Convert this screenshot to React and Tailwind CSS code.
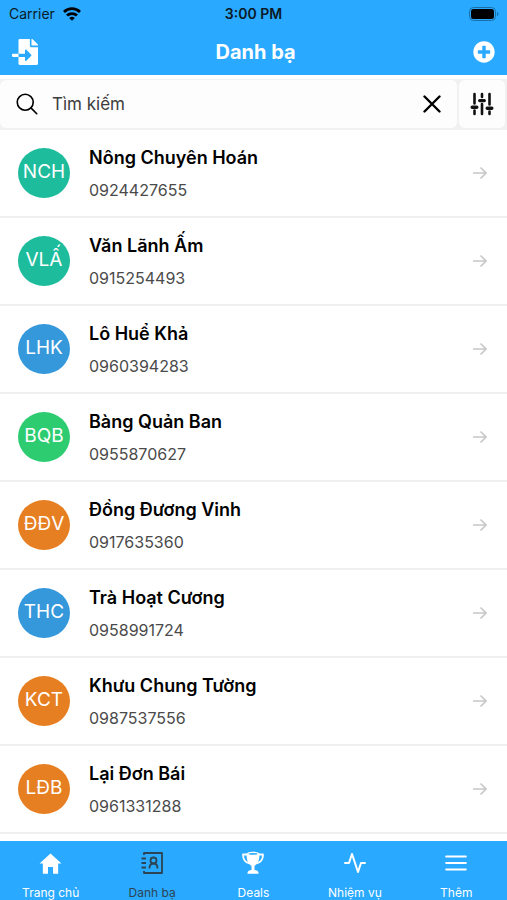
import { FaFileImport, FaPlusCircle } from "react-icons/fa";
import { IoMdHome } from "react-icons/io";
import { IoSearchOutline } from "react-icons/io5";
import { FiActivity, FiMenu } from "react-icons/fi";

const contacts = [
  { initials: "NCH", name: "Nông Chuyên Hoán", phone: "0924427655", color: "bg-[#1dbc9c]" },
  { initials: "VLẤ", name: "Văn Lãnh Ấm", phone: "0915254493", color: "bg-[#1dbc9c]" },
  { initials: "LHK", name: "Lô Huể Khả", phone: "0960394283", color: "bg-[#3498db]" },
  { initials: "BQB", name: "Bàng Quản Ban", phone: "0955870627", color: "bg-[#2ecc71]" },
  { initials: "ĐĐV", name: "Đồng Đương Vinh", phone: "0917635360", color: "bg-[#e67e22]" },
  { initials: "THC", name: "Trà Hoạt Cương", phone: "0958991724", color: "bg-[#3498db]" },
  { initials: "KCT", name: "Khưu Chung Tường", phone: "0987537556", color: "bg-[#e67e22]" },
  { initials: "LĐB", name: "Lại Đơn Bái", phone: "0961331288", color: "bg-[#e67e22]" },
];

function WifiIcon() {
  return (
    <svg width="18" height="14" viewBox="0 0 18 14" fill="none" stroke="#000" strokeWidth="2.8" aria-hidden="true">
      <path d="M1 5a11.4 11.4 0 0 1 16 0" />
      <path d="M4 8.6a7.2 7.2 0 0 1 10 0" />
      <path d="M9 13.8 6.2 11a4 4 0 0 1 5.6 0z" fill="#000" stroke="none" />
    </svg>
  );
}

function BatteryIcon() {
  return (
    <svg width="30" height="14" viewBox="0 0 30 14" aria-hidden="true">
      <rect x="0.5" y="0.5" width="26" height="13" rx="4" fill="none" stroke="#1b6fa6" />
      <rect x="2" y="2" width="23" height="10" rx="2.5" fill="#000" />
      <path d="M28 4.8c2 .8 2 3.6 0 4.4z" fill="#1b6fa6" />
    </svg>
  );
}

function SlidersIcon() {
  return (
    <svg width="24" height="24" viewBox="0 0 24 24" fill="none" stroke="currentColor" strokeLinecap="round" aria-hidden="true">
      <path d="M4.500 2v9.500M4.500 18.500V22M12 2v3M12 12v10M19.500 2v10.500M19.500 19.500V22" strokeWidth="2.600" />
      <path d="M2.200 15.200h4.600M9.700 8.600h4.600M17.200 16.200h4.600" strokeWidth="3.400" />
    </svg>
  );
}

function ContactsIcon() {
  return (
    <svg width="24" height="24" viewBox="0 0 24 24" fill="none" stroke="currentColor" strokeWidth="1.800" strokeLinejoin="round" aria-hidden="true">
      <path d="M4 4V2h18v20H4v-2" />
      <path d="M1.500 7.500h4.500M1.500 12h4.500M1.500 16.500h4.500" />
      <circle cx="13.500" cy="9.500" r="3" />
      <path d="M9.500 17.500c0-3 1.500-5 4-5s4 2 4 5" />
    </svg>
  );
}

function TrophyIcon() {
  return (
    <svg width="24" height="24" viewBox="0 0 24 24" aria-hidden="true">
      <path d="M6.500 3.500H2c0 5 2.500 8 6.500 9M17.500 3.500H22c0 5-2.500 8-6.500 9" fill="none" stroke="currentColor" strokeWidth="1.800" strokeLinejoin="round" />
      <path d="M5.500 3c.5-3 12.500-3 13 0 0 6-1.500 9.700-5 12v4c2 .3 4 1 4 2.800v1h-11v-1c0-1.800 2-2.500 4-2.800v-4C7 12.700 5.500 9 5.500 3z" fill="currentColor" />
      <ellipse cx="12" cy="2.900" rx="4.500" ry="0.800" fill="#29a9ff" />
    </svg>
  );
}

function ArrowIcon() {
  return (
    <svg width="14" height="14" viewBox="0 0 14 14" fill="none" stroke="#c8c8c8" strokeWidth="1.600" aria-hidden="true">
      <path d="M0 7h13M7.500 1.500 13 7l-5.500 5.500" />
    </svg>
  );
}

const tabs = [
  { label: "Trang chủ", icon: <IoMdHome size={27} /> },
  { label: "Danh bạ", icon: <ContactsIcon />, active: true },
  { label: "Deals", icon: <TrophyIcon /> },
  { label: "Nhiệm vụ", icon: <FiActivity size={24} /> },
  { label: "Thêm", icon: <FiMenu size={26} /> },
];

export default function App() {
  return (
    <div className="flex min-h-screen flex-col bg-white font-['Inter','Liberation_Sans',sans-serif]">
      <header className="bg-[#29a9ff]">
        <div className="grid h-7 grid-cols-3 items-center px-2 text-sm text-[#0b1a26]">
          <div className="flex items-center gap-2 pl-px">
            <span>Carrier</span>
            <WifiIcon />
          </div>
          <time className="text-center font-semibold">3:00 PM</time>
          <div className="flex justify-end">
            <BatteryIcon />
          </div>
        </div>
        <div className="flex h-[47px] items-center justify-between px-3 text-white">
          <button type="button" aria-label="Nhập danh bạ">
            <FaFileImport size={26} />
          </button>
          <h1 className="text-xl font-bold">Danh bạ</h1>
          <button type="button" aria-label="Thêm liên hệ">
            <FaPlusCircle size={22} />
          </button>
        </div>
      </header>

      <div className="mt-1 flex gap-0.5 bg-[#f1f1f1] pt-px pb-0.5 pr-0.5">
        <div className="flex h-12 min-w-0 flex-1 items-center rounded-md bg-[#fdfdfd] pr-4 pl-3.5">
          <label htmlFor="search" aria-label="Tìm kiếm" className="shrink-0">
            <IoSearchOutline size={26} />
          </label>
          <input
            id="search"
            type="text"
            placeholder="Tìm kiếm"
            className="ml-3 min-w-0 flex-1 bg-transparent text-[17px] leading-6 outline-none placeholder:text-[#3c3c3c]"
          />
          <button type="button" aria-label="Xóa">
            <svg width="18" height="18" viewBox="0 0 18 18" stroke="#000" strokeWidth="2.400" strokeLinecap="round" aria-hidden="true">
              <path d="m1.500 1.500 15 15M16.500 1.500l-15 15" />
            </svg>
          </button>
        </div>
        <button type="button" aria-label="Bộ lọc" className="flex w-[46px] items-center justify-center rounded-md bg-[#fdfdfd] text-[#111]">
          <SlidersIcon />
        </button>
      </div>

      <ul className="flex-1">
        {contacts.map((c) => (
          <li key={c.phone} className="border-b-2 border-[#efefef]">
            <a href={"#" + c.phone} className="flex h-[86px] items-center pr-5 pl-[18px]">
              <span className={"flex h-[50px] w-[52px] shrink-0 items-center justify-center rounded-[50%] pb-px text-[19px] text-white " + c.color}>
                {c.initials}
              </span>
              <span className="ml-[19px] flex min-w-0 flex-1 flex-col gap-2 pt-0.5">
                <span className="text-lg leading-6 font-semibold text-black">{c.name}</span>
                <span className="text-base leading-6 text-[#4a4a4a]">{c.phone}</span>
              </span>
              <ArrowIcon />
            </a>
          </li>
        ))}
      </ul>

      <nav className="grid h-[59px] grid-cols-5 bg-[#29a9ff] text-white">
        {tabs.map((t) => (
          <a key={t.label} href="#tab" className={"flex flex-col items-center pt-2 text-xs " + (t.active ? "text-[#2d4454]" : "")}>
            <span className="flex h-7 items-center">{t.icon}</span>
            <span className="mt-2 leading-4">{t.label}</span>
          </a>
        ))}
      </nav>
    </div>
  );
}
